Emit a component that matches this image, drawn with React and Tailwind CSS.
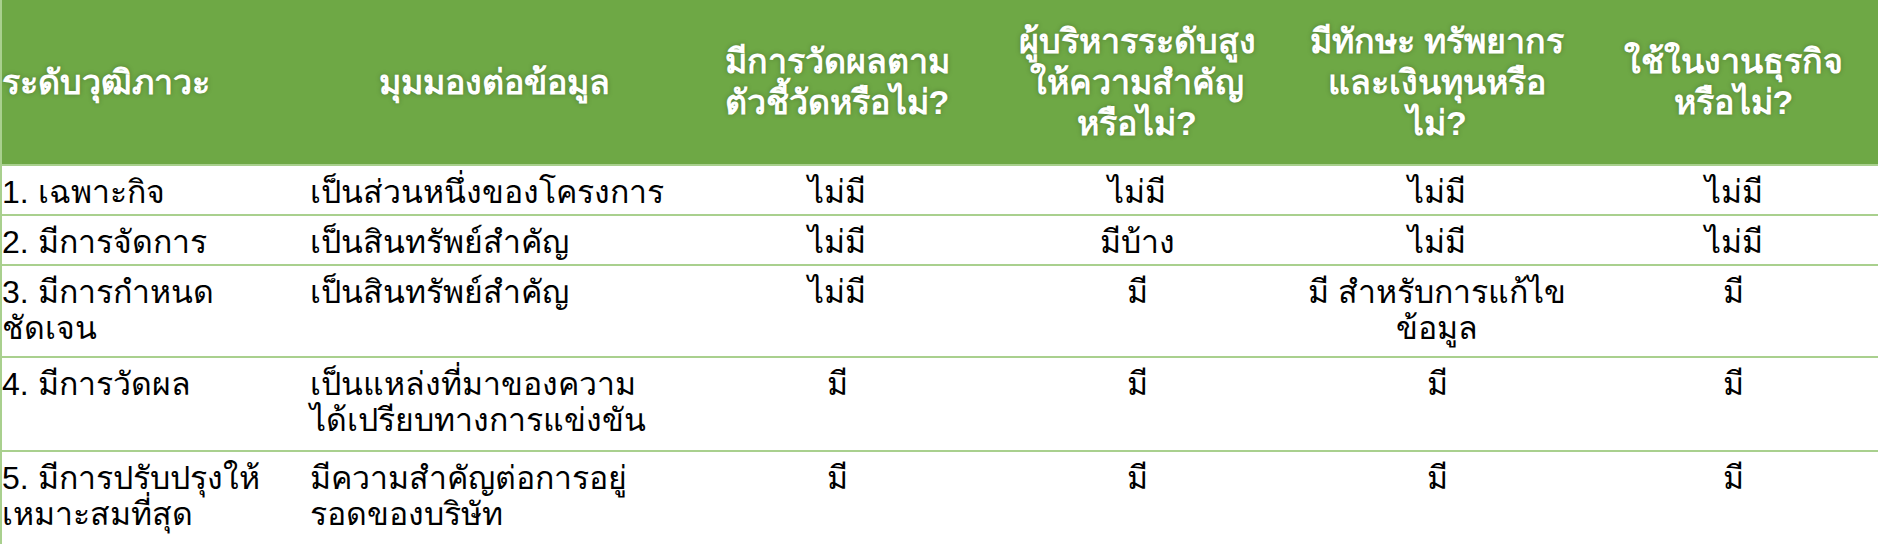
const head = [
  "ระดับวุฒิภาวะ",
  "มุมมองต่อข้อมูล",
  "มีการวัดผลตาม\nตัวชี้วัดหรือไม่?",
  "ผู้บริหารระดับสูง\nให้ความสำคัญ\nหรือไม่?",
  "มีทักษะ ทรัพยากร\nและเงินทุนหรือ\nไม่?",
  "ใช้ในงานธุรกิจ\nหรือไม่?",
];

const rows = [
  { h: "h-[50px]", cells: ["1. เฉพาะกิจ", "เป็นส่วนหนึ่งของโครงการ", "ไม่มี", "ไม่มี", "ไม่มี", "ไม่มี"] },
  { h: "h-[50px]", cells: ["2. มีการจัดการ", "เป็นสินทรัพย์สำคัญ", "ไม่มี", "มีบ้าง", "ไม่มี", "ไม่มี"] },
  { h: "h-[92px]", cells: ["3. มีการกำหนด\nชัดเจน", "เป็นสินทรัพย์สำคัญ", "ไม่มี", "มี", "มี สำหรับการแก้ไข\nข้อมูล", "มี"] },
  { h: "h-[94px]", cells: ["4. มีการวัดผล", "เป็นแหล่งที่มาของความ\nได้เปรียบทางการแข่งขัน", "มี", "มี", "มี", "มี"] },
  { h: "h-[96px]", cells: ["5. มีการปรับปรุงให้\nเหมาะสมที่สุด", "มีความสำคัญต่อการอยู่\nรอดของบริษัท", "มี", "มี", "มี", "มี"] },
];

const cols = "grid grid-cols-[300px_385px_300px_300px_300px_293px]";

export default function App() {
  return (
    <div className="w-[1878px] h-[544px] overflow-hidden bg-white font-['Liberation_Sans',sans-serif] border-l-2 border-[#a9d08e]">
      {/* header */}
      <div className={`${cols} h-[164px] bg-[#6ea845] text-white font-bold text-[34px] leading-[41px] [text-shadow:0_0_5px_rgba(0,0,0,0.25)]`}>
        {head.map((t, i) => (
          <div key={i} className={`flex items-center whitespace-pre-line ${i === 0 ? "pl-0 text-left" : "justify-center text-center"}`}>
            {t}
          </div>
        ))}
      </div>

      {rows.map((r, ri) => (
        <div key={ri} className={`${cols} ${r.h} border-t-2 border-[#a9d08e] text-black text-[32px] leading-[36px]`}>
          {r.cells.map((c, ci) => (
            <div key={ci} className={`pt-2 whitespace-pre-line ${ci === 0 ? "pl-0" : ci === 1 ? "pl-2" : "text-center"}`}>
              {c}
            </div>
          ))}
        </div>
      ))}
    </div>
  );
}
